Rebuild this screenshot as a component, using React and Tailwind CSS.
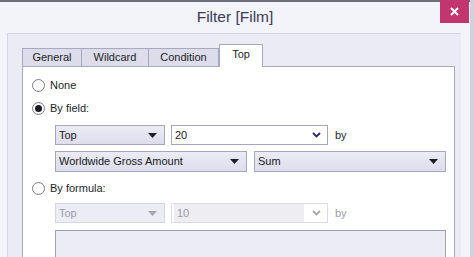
import React from 'react';

const font = { fontFamily: '"Liberation Sans", Arial, sans-serif' };

const Caret = ({ disabled }) => (
  <svg width="9" height="5" viewBox="0 0 9 5" className="shrink-0">
    <path d="M0 0 L9 0 L4.5 5 Z" fill={disabled ? '#a6a6b4' : '#1e1e28'} />
  </svg>
);

const Chevron = ({ disabled }) => (
  <svg width="9" height="6" viewBox="0 0 9 6" className="shrink-0">
    <path d="M1 1 L4.5 4.5 L8 1" fill="none" stroke={disabled ? '#a6a6b4' : '#2a2a66'} strokeWidth="1.8" />
  </svg>
);

const Radio = ({ checked, label }) => (
  <div className="flex items-center gap-[5px] h-[16px]">
    <div className="w-[13px] h-[13px] rounded-full border border-[#7a7a90] bg-white flex items-center justify-center">
      {checked && <div className="w-[7px] h-[7px] rounded-full bg-[#1a1a24]" />}
    </div>
    <span className="text-[11px] text-[#1e1e2a]">{label}</span>
  </div>
);

const Select = ({ value, width, height = 'h-[20px]', disabled }) => (
  <div
    className={`${height} flex items-center justify-between pl-[3px] pr-[7px] border ${
      disabled
        ? 'border-[#d6d6e2] bg-[#ececf4] text-[#9a9aaa]'
        : 'border-[#a6a6c0] bg-gradient-to-b from-[#ececf6] to-[#dcdcec] text-[#1a1a24]'
    } ${width}`}
  >
    <span className="text-[11px]">{value}</span>
    <Caret disabled={disabled} />
  </div>
);

const Combo = ({ value, disabled }) => (
  <div
    className={`h-[20px] w-[157px] flex items-center justify-between border bg-white pr-[6px] ${
      disabled ? 'border-[#dcdce6]' : 'border-[#a6a6c0]'
    }`}
  >
    <div
      className={`flex-1 h-full flex items-center pl-[3px] text-[11px] mr-[8px] ${
        disabled ? 'bg-[#ededf2] text-[#9a9aaa] m-[2px]' : 'text-[#1a1a24]'
      }`}
    >
      {value}
    </div>
    <Chevron disabled={disabled} />
  </div>
);

const tabs = ['General', 'Wildcard', 'Condition', 'Top'];
const tabWidths = ['w-[60px]', 'w-[67px]', 'w-[70px]', 'w-[44px]'];

export default function App() {
  return (
    <div
      className="relative w-[474px] h-[257px] overflow-hidden bg-[#f3f3fa] border-r-[4px] border-[#d2d2de]"
      style={font}
    >
      <div className="h-[2px] bg-[#6e6e78]" />
      {/* title bar */}
      <div className="h-[31px] flex items-center justify-center text-[15.5px] text-[#3a3a58] pb-[2px]">
        Filter [Film]
      </div>
      <div className="absolute top-0 left-[440px] w-[29px] h-[23px] bg-[#c2366f] flex items-center justify-center">
        <svg width="9" height="9" viewBox="0 0 9 9">
          <path d="M1 1 L8 8 M8 1 L1 8" stroke="white" strokeWidth="2" />
        </svg>
      </div>

      {/* group panel */}
      <div className="ml-[7px] mr-[9px] h-[240px] border-t border-l border-[#d4d4e2] bg-[#ebebf5] pl-[14px] pr-[6px] pt-[10px]">
        <div className="flex items-end h-[22px]">
          {tabs.map((t, i) => {
            const active = t === 'Top';
            return (
              <div
                key={t}
                className={`${tabWidths[i]} flex items-center justify-center text-[11px] text-[#1e1e2a] border-t border-r border-[#a8a8c0] ${
                  i === 0 ? 'border-l' : ''
                } ${
                  active
                    ? 'h-[23px] bg-white -mb-px relative z-10 pb-[3px] border-l'
                    : 'h-[18px] bg-[#dcdcea]'
                }`}
              >
                {t}
              </div>
            );
          })}
        </div>
        <div className="h-[200px] bg-white border border-[#a8a8c0] pl-[9px] pt-[10px]">
          <Radio label="None" />
          <div className="h-[7px]" />
          <Radio checked label="By field:" />
          <div className="pl-[23px] pt-[9px]">
            <div className="flex items-center gap-[6px]">
              <Select value="Top" width="w-[110px]" />
              <Combo value="20" />
              <span className="text-[11px] text-[#1e1e2a] ml-[1px]">by</span>
            </div>
            <div className="flex items-center gap-[7px] mt-[6px]">
              <Select value="Worldwide Gross Amount" width="w-[192px]" height="h-[21px]" />
              <Select value="Sum" width="w-[192px]" height="h-[21px]" />
            </div>
          </div>
          <div className="mt-[8px]">
            <Radio label="By formula:" />
          </div>
          <div className="pl-[23px] pt-[7px]">
            <div className="flex items-center gap-[6px]">
              <Select value="Top" width="w-[110px]" disabled />
              <Combo value="10" disabled />
              <span className="text-[11px] text-[#9a9aaa] ml-[1px]">by</span>
            </div>
            <div className="mt-[7px] w-[391px] h-[40px] border border-[#a0a0b8] bg-[#ececf4]" />
          </div>
        </div>
      </div>
    </div>
  );
}
